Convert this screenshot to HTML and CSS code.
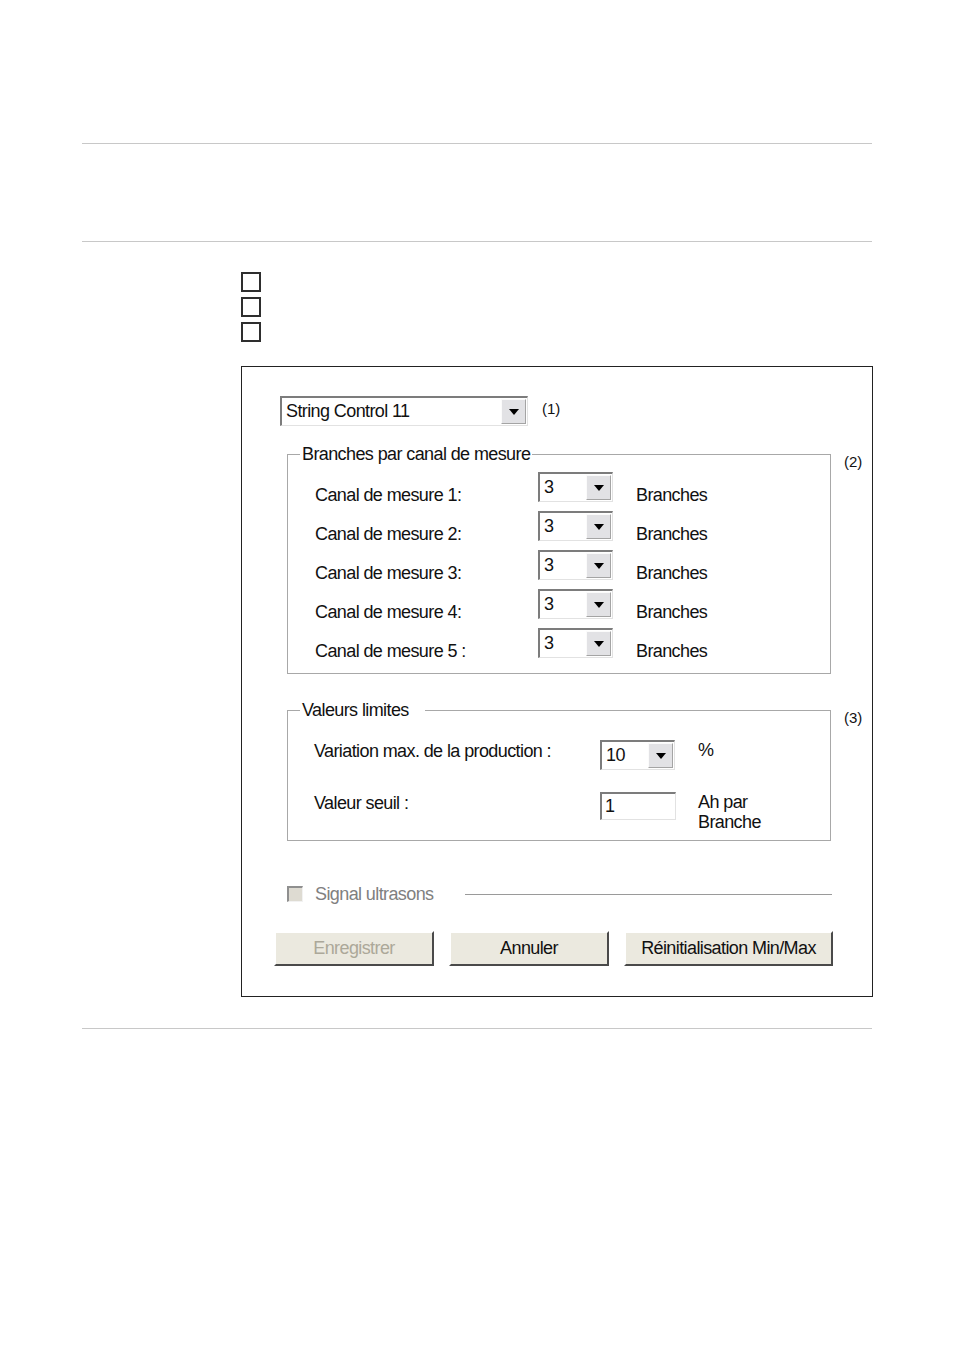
FILE: index.html
```html
<!DOCTYPE html>
<html lang="fr">
<head>
  <meta charset="UTF-8" />
  <title>String Control - Réglages</title>
  <link rel="stylesheet" href="styles.css">
</head>
<body>
  <div class="page">
    <div class="rule rule-top"></div>
    <div class="rule rule-mid"></div>

    <div class="steps">
      <span class="step-box"></span>
      <span class="step-box"></span>
      <span class="step-box"></span>
    </div>

    <div class="shot">
      <div class="device-row">
        <div class="combo combo-wide">
          <span class="combo-value">String Control 11</span>
          <span class="combo-btn"></span>
        </div>
        <span class="callout">(1)</span>
      </div>

      <div class="group-row group-row-first">
        <fieldset class="group">
          <legend>Branches par canal de mesure</legend>
          <div class="branch-grid">
            <span class="label">Canal de mesure 1:</span>
            <div class="combo combo-spin"><span class="combo-value">3</span><span class="combo-btn"></span></div>
            <span class="label">Branches</span>

            <span class="label">Canal de mesure 2:</span>
            <div class="combo combo-spin"><span class="combo-value">3</span><span class="combo-btn"></span></div>
            <span class="label">Branches</span>

            <span class="label">Canal de mesure 3:</span>
            <div class="combo combo-spin"><span class="combo-value">3</span><span class="combo-btn"></span></div>
            <span class="label">Branches</span>

            <span class="label">Canal de mesure 4:</span>
            <div class="combo combo-spin"><span class="combo-value">3</span><span class="combo-btn"></span></div>
            <span class="label">Branches</span>

            <span class="label">Canal de mesure 5 :</span>
            <div class="combo combo-spin"><span class="combo-value">3</span><span class="combo-btn"></span></div>
            <span class="label">Branches</span>
          </div>
        </fieldset>
        <span class="callout callout-group">(2)</span>
      </div>

      <div class="group-row group-row-second">
        <fieldset class="group group-limits">
          <legend>Valeurs limites</legend>
          <div class="limit-grid">
            <span class="label">Variation max. de la production :</span>
            <div class="combo combo-spin"><span class="combo-value">10</span><span class="combo-btn"></span></div>
            <span class="label">%</span>

            <span class="label">Valeur seuil :</span>
            <div class="field"><span class="combo-value">1</span></div>
            <span class="label">Ah par<br>Branche</span>
          </div>
        </fieldset>
        <span class="callout callout-group">(3)</span>
      </div>

      <div class="signal-row">
        <span class="check-disabled"></span>
        <span class="signal-text">Signal ultrasons</span>
        <span class="signal-line"></span>
      </div>

      <div class="button-row">
        <button class="btn btn-disabled">Enregistrer</button>
        <button class="btn">Annuler</button>
        <button class="btn btn-wide">Réinitialisation Min/Max</button>
      </div>
    </div>

    <div class="rule rule-bottom"></div>
  </div>
</body>
</html>
```

FILE: styles.css
```css
body {
  margin: 0;
  background: #fff;
  font-family: 'Liberation Sans', Arial, sans-serif;
  color: #111;
}
.page {
  width: 790px;
  padding-left: 82px;
}
.rule {
  height: 1px;
  background: #c8c8c8;
}
.rule-top {
  margin-top: 143px;
}
.rule-mid {
  margin-top: 97px;
}
.rule-bottom {
  margin-top: 31px;
}

/* step checkboxes */
.steps {
  display: flex;
  flex-direction: column;
  gap: 5px;
  margin: 30px 0 0 159px;
}
.step-box {
  width: 20px;
  height: 20px;
  box-sizing: border-box;
  border: 2px solid #2e2e2e;
}

/* dialog screenshot */
.shot {
  box-sizing: border-box;
  width: 632px;
  height: 631px;
  margin: 24px 0 0 159px;
  border: 1px solid #222;
  font-size: 18px;
  letter-spacing: -0.6px;
}
.label {
  line-height: 20px;
  white-space: nowrap;
}
.callout {
  font-size: 15px;
  letter-spacing: 0;
  margin: 4px 0 0 14px;
}
.device-row {
  display: flex;
  align-items: flex-start;
  margin: 29px 0 0 38px;
}

/* combo boxes */
.combo {
  box-sizing: border-box;
  display: flex;
  align-items: stretch;
  justify-content: space-between;
  height: 30px;
  background: #fff;
  border-top: 2px solid #7c7c7c;
  border-left: 2px solid #7c7c7c;
  border-right: 1px solid #e2e2e2;
  border-bottom: 1px solid #e2e2e2;
}
.combo-wide {
  width: 248px;
}
.combo-spin {
  width: 75px;
}
.combo-value {
  padding-left: 4px;
  line-height: 26px;
  white-space: nowrap;
}
.combo-btn {
  width: 23px;
  margin: 1px;
  background: #e2e2e5;
  border: 1px solid;
  border-color: #fbfbfb #a4a4a4 #a4a4a4 #fbfbfb;
  display: flex;
  align-items: center;
  justify-content: center;
}
.combo-btn::after {
  content: "";
  border-left: 5px solid transparent;
  border-right: 5px solid transparent;
  border-top: 6px solid #000;
}
.field {
  box-sizing: border-box;
  width: 76px;
  height: 28px;
  background: #fff;
  border-top: 2px solid #7c7c7c;
  border-left: 2px solid #7c7c7c;
  border-right: 1px solid #e2e2e2;
  border-bottom: 1px solid #e2e2e2;
}
.field .combo-value {
  line-height: 24px;
  padding-left: 3px;
}

/* group boxes */
.group-row {
  display: flex;
  align-items: flex-start;
  margin-left: 45px;
}
.group-row-first {
  margin-top: 18px;
}
.group-row-second {
  margin-top: 26px;
}
.group {
  box-sizing: border-box;
  width: 544px;
  margin: 0;
  padding: 0 0 0 12px;
  border: 1px solid #a8a8a8;
}
.group legend {
  padding: 0 2px;
  line-height: 20px;
}
.group-limits legend {
  padding-right: 16px;
}
.callout-group {
  margin: 9px 0 0 13px;
}
.branch-grid {
  display: grid;
  grid-template-columns: 200px 75px auto;
  grid-auto-rows: 30px;
  column-gap: 23px;
  row-gap: 9px;
  align-items: start;
  margin: 8px 0 15px 15px;
}
.branch-grid .label {
  margin-top: 13px;
}
.limit-grid {
  display: grid;
  grid-template-columns: 264px 76px auto;
  column-gap: 22px;
  row-gap: 22px;
  align-items: start;
  margin: 20px 0 8px 14px;
}
.limit-grid .label:first-child,
.limit-grid .label:nth-child(4) {
  margin-top: 1px;
}

/* ultrasons line */
.signal-row {
  display: flex;
  align-items: center;
  width: 545px;
  height: 20px;
  margin: 43px 0 0 45px;
}
.check-disabled {
  box-sizing: border-box;
  width: 16px;
  height: 16px;
  background: #dedbd2;
  border-top: 2px solid #8f8f8f;
  border-left: 2px solid #8f8f8f;
  border-right: 1px solid #f2f2f2;
  border-bottom: 1px solid #f2f2f2;
}
.signal-text {
  margin-left: 12px;
  color: #808080;
}
.signal-line {
  flex: 1;
  height: 1px;
  margin-left: 32px;
  background: #9a9a9a;
}

/* buttons */
.button-row {
  display: flex;
  gap: 15px;
  margin: 27px 0 0 32px;
}
.btn {
  box-sizing: border-box;
  width: 160px;
  height: 35px;
  padding: 0;
  font-family: inherit;
  font-size: 18px;
  letter-spacing: -0.6px;
  white-space: nowrap;
  color: #111;
  background: #ebe9df;
  border: 2px solid;
  border-color: #fff #4a4a4a #4a4a4a #fff;
}
.btn-wide {
  width: 209px;
}
.btn-disabled {
  color: #aca899;
}
```
